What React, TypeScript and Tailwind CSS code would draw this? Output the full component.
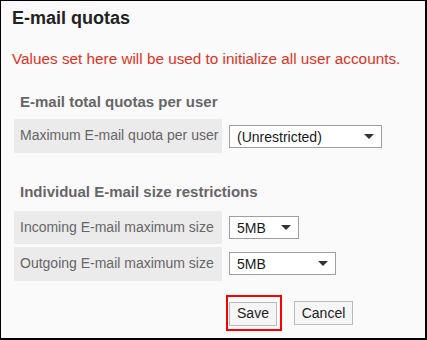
function Select({ value, width, top }: { value: string; width: string; top: string }) {
  return (
    <div
      className={`${width} ${top} ml-[7px] h-[23px] border border-[#a0a0a0] bg-white flex items-center justify-between pl-[7px] pr-[7px] text-[14px] text-[#1a1a1a]`}
    >
      <span className="leading-[18px] whitespace-nowrap">{value}</span>
      <svg width="10" height="5" viewBox="0 0 10 5">
        <polygon points="0,0 10,0 5,5" fill="#333" />
      </svg>
    </div>
  );
}

function Row({ label, children, height, mt }: { label: string; children: React.ReactNode; height: string; mt: string }) {
  return (
    <div className={`flex items-start ${mt}`}>
      <div className={`w-[208px] shrink-0 ${height} bg-[#ebebeb] pt-[7px] pl-[6px] pr-[4px] whitespace-nowrap text-[14px] leading-[18px] text-[#666]`}>
        {label}
      </div>
      {children}
    </div>
  );
}

export default function App() {
  return (
    <div className="w-[427px] h-[340px] bg-[#fafafa] border-l border-t border-r-2 border-b-2 border-black font-['Liberation_Sans',Arial,sans-serif]">
      <div className="pl-[11px] pt-[6px]">
        <h1 className="text-[18px] leading-[22px] font-bold text-[#222]">E-mail quotas</h1>
        <p className="mt-[21px] text-[15.3px] leading-[18px] text-[#e2311d] whitespace-nowrap">
          Values set here will be used to initialize all user accounts.
        </p>

        <h2 className="mt-[25px] ml-[8px] text-[15px] leading-[18px] font-bold text-[#666]">
          E-mail total quotas per user
        </h2>
        <div className="ml-[2px]">
          <Row label="Maximum E-mail quota per user" height="h-[34px]" mt="mt-[8px]">
            <Select value="(Unrestricted)" width="w-[153px]" top="mt-[6px]" />
          </Row>
        </div>

        <h2 className="mt-[30px] ml-[8px] text-[15px] leading-[18px] font-bold text-[#666]">
          Individual E-mail size restrictions
        </h2>
        <div className="ml-[2px]">
          <Row label="Incoming E-mail maximum size" height="h-[33px]" mt="mt-[10px]">
            <Select value="5MB" width="w-[70px]" top="mt-[5px]" />
          </Row>
          <Row label="Outgoing E-mail maximum size" height="h-[34px]" mt="mt-[3px]">
            <Select value="5MB" width="w-[107px]" top="mt-[5px]" />
          </Row>
        </div>

        <div className="mt-[14px] ml-[214px] flex items-start">
          <div className="border-2 border-[#ff0000] pl-[1px] pr-[3px] pt-[4px] pb-[3px]">
            <button className="w-[48px] h-[24px] border border-[#bbb] bg-[#f5f5f5] text-[14px] text-[#222]">
              Save
            </button>
          </div>
          <button className="ml-[12px] mt-[6px] w-[59px] h-[24px] border border-[#bbb] bg-[#f5f5f5] text-[14px] text-[#222]">
            Cancel
          </button>
        </div>
      </div>
    </div>
  );
}
